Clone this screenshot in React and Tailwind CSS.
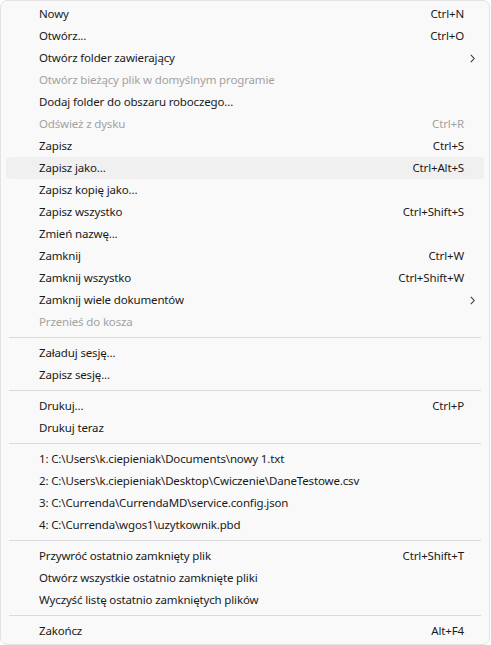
import React from "react";

const items = [
  { label: "Nowy", shortcut: "Ctrl+N" },
  { label: "Otwórz...", shortcut: "Ctrl+O" },
  { label: "Otwórz folder zawierający", submenu: true },
  { label: "Otwórz bieżący plik w domyślnym programie", disabled: true },
  { label: "Dodaj folder do obszaru roboczego..." },
  { label: "Odśwież z dysku", shortcut: "Ctrl+R", disabled: true },
  { label: "Zapisz", shortcut: "Ctrl+S" },
  { label: "Zapisz jako...", shortcut: "Ctrl+Alt+S", hover: true },
  { label: "Zapisz kopię jako..." },
  { label: "Zapisz wszystko", shortcut: "Ctrl+Shift+S" },
  { label: "Zmień nazwę..." },
  { label: "Zamknij", shortcut: "Ctrl+W" },
  { label: "Zamknij wszystko", shortcut: "Ctrl+Shift+W" },
  { label: "Zamknij wiele dokumentów", submenu: true },
  { label: "Przenieś do kosza", disabled: true },
  { sep: true },
  { label: "Załaduj sesję..." },
  { label: "Zapisz sesję..." },
  { sep: true },
  { label: "Drukuj...", shortcut: "Ctrl+P" },
  { label: "Drukuj teraz" },
  { sep: true },
  { label: "1: C:\\Users\\k.ciepieniak\\Documents\\nowy 1.txt" },
  { label: "2: C:\\Users\\k.ciepieniak\\Desktop\\Cwiczenie\\DaneTestowe.csv" },
  { label: "3: C:\\Currenda\\CurrendaMD\\service.config.json" },
  { label: "4: C:\\Currenda\\wgos1\\uzytkownik.pbd" },
  { sep: true },
  { label: "Przywróć ostatnio zamknięty plik", shortcut: "Ctrl+Shift+T" },
  { label: "Otwórz wszystkie ostatnio zamknięte pliki" },
  { label: "Wyczyść listę ostatnio zamkniętych plików" },
  { sep: true },
  { label: "Zakończ", shortcut: "Alt+F4" },
];

function Chevron() {
  return (
    <svg width="5" height="9" viewBox="0 0 5 9" fill="none" aria-hidden="true">
      <path d="M0.8 0.8 L4.2 4.5 L0.8 8.2" stroke="#3a3a3a" strokeWidth="1.1" />
    </svg>
  );
}

function MenuRow({ item }) {
  const color = item.disabled ? "text-[#a2a2a2]" : "text-[#1a1a1a]";
  return (
    <div
      className={`mx-[5px] h-[22px] flex items-center pl-[33px] rounded-[4px] ${color} ${
        item.hover ? "bg-[#f0f0f0]" : ""
      }`}
    >
      <span className="flex-1 whitespace-nowrap">{item.label}</span>
      {item.shortcut && <span className="whitespace-nowrap">{item.shortcut}</span>}
      <span className="w-[20px] flex items-center pl-[6px]">
        {item.submenu && <Chevron />}
      </span>
    </div>
  );
}

export default function App() {
  return (
    <div className="w-[491px] h-[645px] bg-white overflow-hidden">
      <div
        className="w-[490px] bg-[#f9f9f9] border border-[#e3e3e3] rounded-[7px] pt-[2px] pb-[2px] text-[11.5px] tracking-[-0.15px] leading-none"
        style={{ fontFamily: '"Segoe UI", "Noto Sans", sans-serif' }}
      >
        {items.map((item, i) =>
          item.sep ? (
            <div key={i} className="py-[4px] px-[8px]">
              <div className="h-px bg-[#dadada]" />
            </div>
          ) : (
            <MenuRow key={i} item={item} />
          )
        )}
      </div>
    </div>
  );
}
